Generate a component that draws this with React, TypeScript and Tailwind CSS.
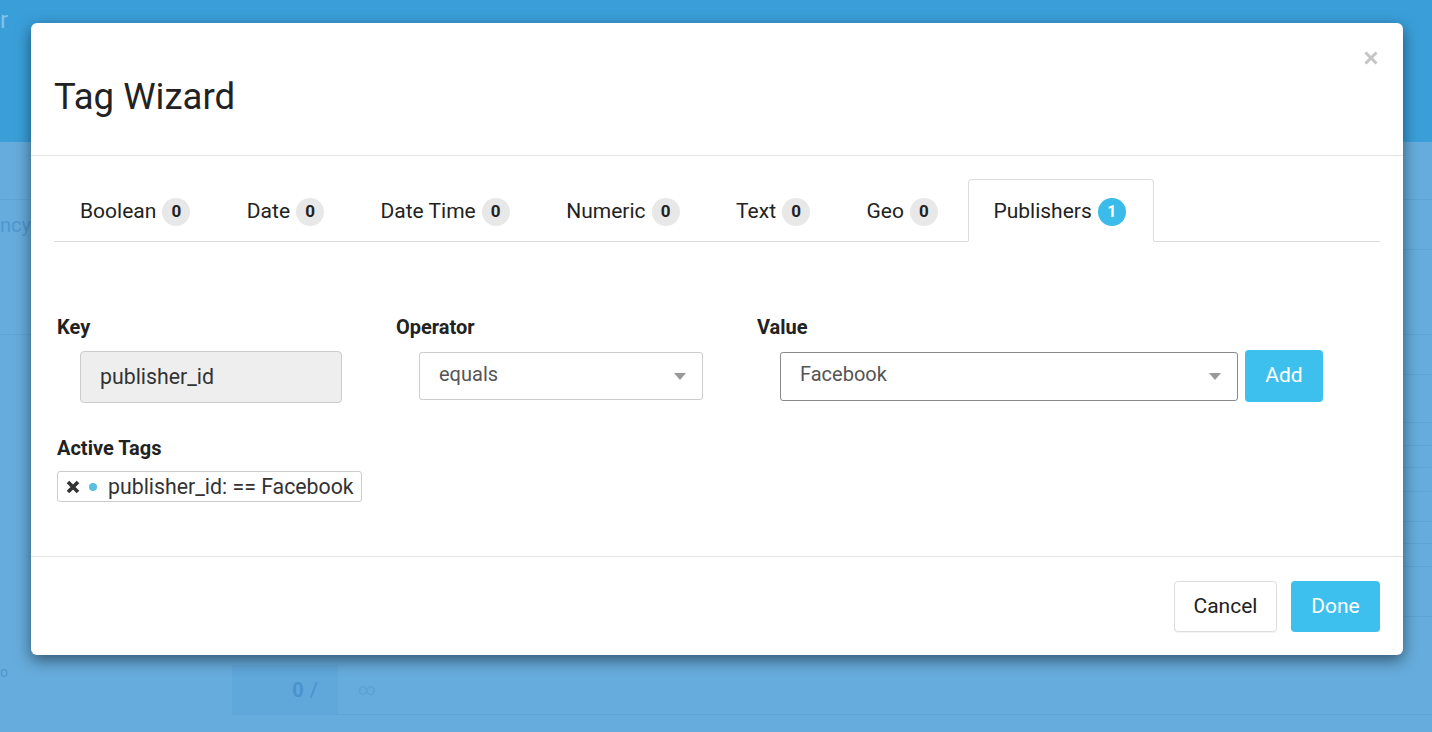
import React from "react";

const tabs = [
  { label: "Boolean", count: 0 },
  { label: "Date", count: 0 },
  { label: "Date Time", count: 0 },
  { label: "Numeric", count: 0 },
  { label: "Text", count: 0 },
  { label: "Geo", count: 0 },
  { label: "Publishers", count: 1, active: true },
];

function Caret() {
  return (
    <svg width="12" height="7" viewBox="0 0 12 7" className="shrink-0">
      <path d="M0 0 L12 0 L6 7 Z" fill="#999" />
    </svg>
  );
}

export default function App() {
  return (
    <div className="relative w-[1432px] h-[732px] overflow-hidden font-['Roboto',sans-serif] bg-[#66acdc]">
      {/* background page */}
      <div className="h-[142px] bg-[#3a9fd9] flex items-start">
        <span className="text-[24px] leading-none text-[#80c2ea] mt-[8px] ml-0">r</span>
      </div>
      <div className="flex h-[590px]">
        <div className="w-[232px] flex flex-col">
          <div className="h-[58px] border-b border-[#5ea4d7]" />
          <div className="h-[50px] flex items-center text-[20px] text-[#4f97cf]">ncy</div>
          <div className="h-[85px] border-b border-[#5ea4d7]" />
          <div className="flex-1" />
          <div className="h-[70px] flex items-start text-[14px] text-[#4f97cf]">o</div>
        </div>
        <div className="flex-1 flex flex-col">
          <div className="h-[58px] border-b border-[#5ea4d7]" />
          <div className="h-[50px] border-b border-[#5ea4d7]" />
          <div className="h-[85px] border-b border-[#5ea4d7]" />
          <div className="h-[40px] border-b border-[#5ea4d7]" />
          <div className="h-[48px] border-b border-[#5ea4d7]" />
          <div className="h-[23px] border-b border-[#5ea4d7]" />
          <div className="h-[22px] border-b border-[#5ea4d7]" />
          <div className="h-[24px] border-b border-[#5ea4d7]" />
          <div className="h-[30px] border-b border-[#5ea4d7]" />
          <div className="h-[22px] border-b border-[#5ea4d7]" />
          <div className="h-[23px] border-b border-[#5ea4d7]" />
          <div className="h-[50px] border-b border-[#5ea4d7]" />
          <div className="h-[50px] flex border-b border-[#5ea4d7] mt-[48px]">
            <div className="w-[106px] bg-[#60a7da] flex items-center justify-end pr-[20px] text-[20px] text-[#4a93cc]">
              <span className="font-bold">0</span>
              <span className="ml-[6px]">/</span>
            </div>
            <div className="flex items-center pl-[20px] text-[17px] text-[#5ba2d7]">∞</div>
          </div>
        </div>
      </div>

      {/* modal */}
      <div className="absolute left-[31px] top-[23px] w-[1372px] h-[632px] bg-white rounded-[6px] shadow-[0_5px_15px_rgba(0,0,0,0.5)] flex flex-col text-[#222]">
        {/* header */}
        <div className="h-[133px] border-b border-[#e5e5e5] flex justify-between px-[23px]">
          <h1 className="pt-[51px] text-[36.5px] leading-[45px] font-normal text-[#222]">Tag Wizard</h1>
          <button className="pt-[28px] pr-[2px] self-start">
            <svg width="14" height="14" viewBox="0 0 14 14">
              <path d="M1.5 1.5 L12.5 12.5 M12.5 1.5 L1.5 12.5" stroke="#c4c4c4" strokeWidth="3" />
            </svg>
          </button>
        </div>

        {/* body */}
        <div className="h-[400px] px-[23px] pt-[23px]">
          <ul className="flex border-b border-[#ddd] h-[63px]">
            {tabs.map((t) => (
              <li
                key={t.label}
                className={
                  t.active
                    ? "-mb-px h-[63px] flex items-center pt-[2px] pl-[24px] pr-[27px] mr-[4.5px] border border-[#ddd] border-b-white bg-white rounded-t-[4px]"
                    : "-mb-px h-[63px] flex items-center pt-[2px] px-[25px] mr-[4.5px] border border-transparent"
                }
              >
                <span className="text-[21px] text-[#222]">{t.label}</span>
                <span
                  className={
                    t.active
                      ? "ml-[6px] w-[28px] h-[28px] rounded-full bg-[#3bbbe9] text-white text-[16px] font-bold flex items-center justify-center"
                      : "ml-[6px] w-[28px] h-[28px] rounded-full bg-[#e8e8e8] text-[#222] text-[17px] font-bold flex items-center justify-center"
                  }
                >
                  {t.count}
                </span>
              </li>
            ))}
          </ul>

          <div className="pl-[3px] pt-[71px]">
            <div className="flex items-start">
              <div className="w-[339px] flex flex-col">
                <label className="h-[28px] leading-[28px] text-[20px] font-bold text-[#222]">Key</label>
                <div className="ml-[23px] mt-[10px] w-[262px] h-[52px] bg-[#eeeeee] border border-[#ccc] rounded-[4px] flex items-center pl-[19px] text-[21.3px] text-[#333]">
                  publisher_id
                </div>
              </div>
              <div className="w-[361px] flex flex-col">
                <label className="h-[28px] leading-[28px] text-[20px] font-bold text-[#222]">Operator</label>
                <div className="ml-[23px] mt-[11px] w-[284px] h-[48px] bg-white border border-[#ccc] rounded-[3px] flex items-center justify-between pl-[19px] pr-[16px] text-[20px] text-[#555]">
                  <span className="-mt-[4px]">equals</span>
                  <Caret />
                </div>
              </div>
              <div className="flex flex-col">
                <label className="h-[28px] leading-[28px] text-[20px] font-bold text-[#222]">Value</label>
                <div className="mt-[9px] flex items-center">
                  <div className="ml-[23px] w-[458px] h-[49px] bg-white border border-[#8a8a8a] rounded-[3px] flex items-center justify-between pl-[19px] pr-[16px] text-[20px] text-[#555]">
                    <span className="-mt-[4px]">Facebook</span>
                    <Caret />
                  </div>
                  <button className="ml-[7px] w-[78px] h-[52px] bg-[#3ec0ef] rounded-[4px] text-white text-[21px]">
                    Add
                  </button>
                </div>
              </div>
            </div>

            <div className="mt-[31px]">
              <label className="block h-[28px] leading-[28px] text-[20px] font-bold text-[#222]">Active Tags</label>
              <div className="mt-[9px] inline-flex items-center h-[31px] border border-[#ccc] rounded-[3px] pl-[8px] pr-[7px]">
                <svg width="14" height="14" viewBox="0 0 14 14" className="shrink-0">
                  <path d="M2 2 L12 12 M12 2 L2 12" stroke="#333" strokeWidth="3.6" />
                </svg>
                <span className="ml-[9px] w-[8px] h-[8px] rounded-full bg-[#5bc0de]" />
                <span className="ml-[11px] text-[21.3px] text-[#333] leading-none">publisher_id: == Facebook</span>
              </div>
            </div>
          </div>
        </div>

        {/* footer */}
        <div className="flex-1 border-t border-[#e5e5e5] flex justify-end items-start pt-[24px] pr-[23px]">
          <button className="w-[103px] h-[51px] bg-white border border-[#ddd] rounded-[4px] text-[21px] text-[#222] shadow-[0_1px_1px_rgba(0,0,0,0.05)]">
            Cancel
          </button>
          <button className="ml-[14px] w-[89px] h-[51px] bg-[#3ec0ef] rounded-[4px] text-[21px] text-white">
            Done
          </button>
        </div>
      </div>
    </div>
  );
}
